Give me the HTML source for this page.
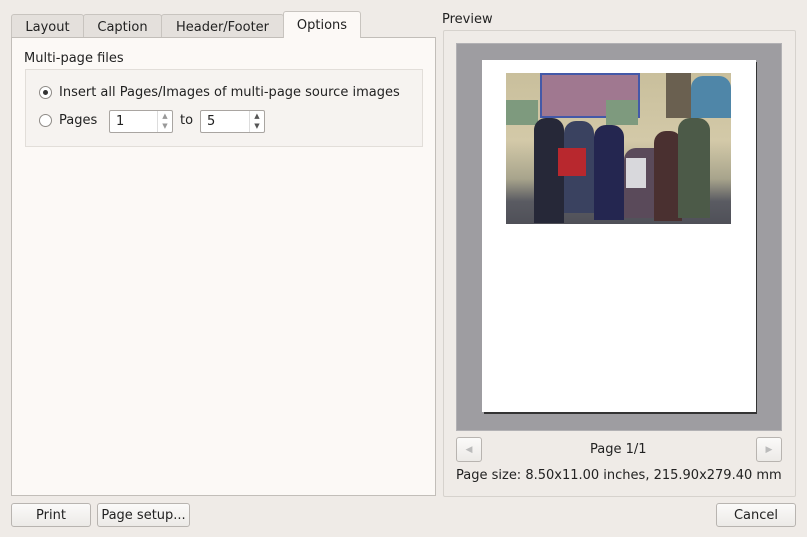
<!DOCTYPE html>
<html><head><style>
body{margin:0;width:807px;height:537px;background:#efebe7;font-family:"DejaVu Sans",sans-serif;font-size:13px;color:#222;position:relative;overflow:hidden}
.a{position:absolute}
.tab{position:absolute;top:13px;height:24px;border:1px solid #c8c4bf;border-bottom:none;background:#e4e0dc;border-radius:3px 3px 0 0;box-sizing:border-box;text-align:center;line-height:24px}
.btn{position:absolute;height:24px;border:1px solid #b8b4b0;border-radius:3px;background:linear-gradient(#fbfaf9,#eceae7);box-sizing:border-box;text-align:center;line-height:24px}
.spin{position:absolute;height:23px;border:1px solid #a9a5a1;border-radius:2px;background:#fff;box-sizing:border-box;line-height:22px;padding-left:6px}
.radio{position:absolute;width:13px;height:13px;border:1px solid #8f8b87;border-radius:50%;background:#fff;box-sizing:border-box}
</style></head><body>
<div class="a" style="left:11px;top:37px;width:425px;height:459px;border:1px solid #c2beb9;background:#fcf9f6;box-sizing:border-box"></div>
<div class="tab" style="left:11px;width:73px;top:14px;height:23px;line-height:25px">Layout</div>
<div class="tab" style="left:83px;width:79px;top:14px;height:23px;line-height:25px">Caption</div>
<div class="tab" style="left:161px;width:123px;top:14px;height:23px;line-height:25px">Header/Footer</div>
<div class="tab" style="left:283px;width:78px;top:11px;height:27px;background:#fcf9f6;line-height:28px">Options</div>
<div class="a" style="left:24px;top:51px">Multi-page files</div>
<div class="a" style="left:25px;top:69px;width:398px;height:78px;border:1px solid #e2ded9;background:#f6f3f0;box-sizing:border-box"></div>
<div class="radio" style="left:39px;top:86px"><div class="a" style="left:3px;top:3px;width:5px;height:5px;border-radius:50%;background:#333"></div></div>
<div class="a" style="left:59px;top:85px">Insert all Pages/Images of multi-page source images</div>
<div class="radio" style="left:39px;top:114px"></div>
<div class="a" style="left:59px;top:113px">Pages</div>
<div class="spin" style="left:109px;top:110px;width:64px">1<div class="a" style="right:0;top:0;width:14px;height:21px;border-left:1px solid #ddd;font-size:7px;line-height:10px;text-align:center;color:#999">▲<br>▼</div></div>
<div class="a" style="left:180px;top:113px">to</div>
<div class="spin" style="left:200px;top:110px;width:65px">5<div class="a" style="right:0;top:0;width:14px;height:21px;border-left:1px solid #ddd;font-size:7px;line-height:10px;text-align:center;color:#555">▲<br>▼</div></div>

<div class="a" style="left:442px;top:12px">Preview</div>
<div class="a" style="left:443px;top:30px;width:353px;height:467px;border:1px solid #d6d2cd;border-radius:2px;box-sizing:border-box"></div>
<div class="a" style="left:456px;top:43px;width:326px;height:388px;background:#9e9da1;border:1px solid #b2b1b4;box-sizing:border-box"></div>
<div class="a" style="left:484px;top:62px;width:273px;height:352px;background:#333"></div>
<div class="a" style="left:482px;top:60px;width:274px;height:352px;background:#fff"></div>
<div class="a" style="left:506px;top:73px;width:225px;height:151px;background:linear-gradient(#c9bf9c 0%,#d3c9a8 45%,#a8a48c 70%,#5a5b62 85%,#4f5058 100%);overflow:hidden">
 <div class="a" style="left:34px;top:0;width:100px;height:45px;background:#a07890;border:2px solid #4459a8;box-sizing:border-box"></div>
 <div class="a" style="left:0;top:27px;width:32px;height:25px;background:#7e9a7e"></div>
 <div class="a" style="left:100px;top:27px;width:32px;height:25px;background:#7e9a7e"></div>
 <div class="a" style="left:160px;top:0;width:25px;height:45px;background:#6a6050"></div>
 <div class="a" style="left:185px;top:3px;width:40px;height:42px;background:#4f86a8;border-radius:12px 12px 0 0"></div>
 <div class="a" style="left:28px;top:45px;width:30px;height:105px;background:#262838;border-radius:12px 12px 0 0"></div>
 <div class="a" style="left:58px;top:48px;width:30px;height:92px;background:#3a4260;border-radius:12px 12px 0 0"></div>
 <div class="a" style="left:88px;top:52px;width:30px;height:95px;background:#242650;border-radius:12px 12px 0 0"></div>
 <div class="a" style="left:118px;top:75px;width:52px;height:70px;background:#5a4a5a;border-radius:12px 12px 0 0"></div>
 <div class="a" style="left:148px;top:58px;width:28px;height:90px;background:#4a3030;border-radius:12px 12px 0 0"></div>
 <div class="a" style="left:172px;top:45px;width:32px;height:100px;background:#4c5a48;border-radius:12px 12px 0 0"></div>
 <div class="a" style="left:52px;top:75px;width:28px;height:28px;background:#b8282e"></div>
 <div class="a" style="left:120px;top:85px;width:20px;height:30px;background:#d8d8dc"></div>
</div>
<div class="btn" style="left:456px;top:437px;width:26px;height:25px;color:#bbb;font-size:9px">◀</div>
<div class="a" style="left:590px;top:442px">Page 1/1</div>
<div class="btn" style="left:756px;top:437px;width:26px;height:25px;color:#bbb;font-size:9px">▶</div>
<div class="a" style="left:456px;top:468px">Page size: 8.50x11.00 inches, 215.90x279.40 mm</div>

<div class="btn" style="left:11px;top:503px;width:80px">Print</div>
<div class="btn" style="left:97px;top:503px;width:93px">Page setup...</div>
<div class="btn" style="left:716px;top:503px;width:80px">Cancel</div>
</body></html>
